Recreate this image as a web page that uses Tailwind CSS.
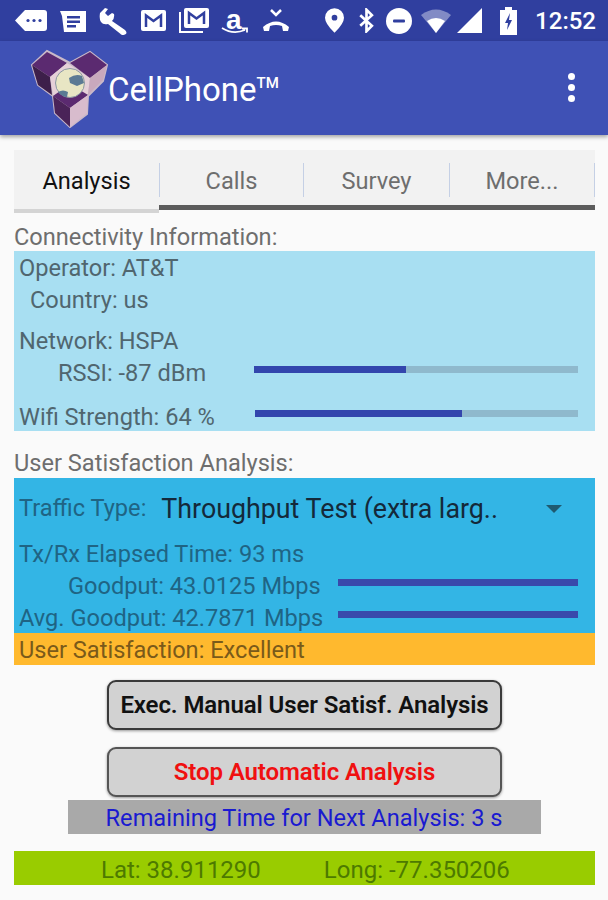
<!DOCTYPE html>
<html lang="en">
  <head>
    <meta charset="UTF-8" />
    <meta name="viewport" content="width=device-width, initial-scale=1.0" />
    <title>CellPhone</title>
    <script src="https://cdn.jsdelivr.net/npm/@tailwindcss/browser@4"></script>
  </head>
  <body class="w-[608px] h-[900px] overflow-hidden bg-[#fafafa] font-['Roboto',sans-serif] text-[23.6px] text-[#6e6e6e]">
    <!-- status bar -->
    <div class="h-[41px] bg-[#303f9f] flex items-center text-white">
      <div class="flex items-center ml-[15px] gap-[13px]">
        <svg class="w-[32px] h-[23px]" viewBox="0 0 32 23" fill="#fff"><path d="M10 1h19a3 3 0 0 1 3 3v15a3 3 0 0 1-3 3H10L0 11.500z"/><circle cx="13" cy="11.500" r="1.600" fill="#303f9f"/><circle cx="19" cy="11.500" r="1.600" fill="#303f9f"/><circle cx="25" cy="11.500" r="1.600" fill="#303f9f"/></svg>
        <svg class="w-[26px] h-[22px]" viewBox="0 0 26 22" fill="#fff"><path d="M0 1h26v21H4L2 6z"/><path d="M7 6h13v2.500H7zM7 10.500h13V13H7zM7 15h9v2.500H7z" fill="#303f9f"/></svg>
        <svg class="w-[29px] h-[28px]" viewBox="0 0 29 28" fill="#fff"><path d="M1 6l5-5 3 1-3 4 3 3 4-3 2 1a8 8 0 0 1-2 7l13 9q3 3 0 4.500t-5-1L9 17q-5 1-7-2T1 6z"/></svg>
        <svg class="w-[25px] h-[21px]" viewBox="0 0 25 21"><rect width="25" height="21" rx="2" fill="#fff"/><path d="M5 17V5.500l7.500 5.500L20 5.500V17" fill="none" stroke="#303f9f" stroke-width="2.500"/></svg>
        <svg class="w-[30px] h-[25px]" viewBox="0 0 30 25"><path d="M1 4v20h23" fill="none" stroke="#fff" stroke-width="2"/><rect x="5" width="25" height="20" rx="2" fill="#fff"/><path d="M10 16V5l7.500 5.500L25 5v11" fill="none" stroke="#303f9f" stroke-width="2.500"/></svg>
        <div class="relative w-[28px] h-[26px] -ml-[1px]">
          <span class="absolute left-[5px] top-[-2px] text-[28px] leading-[28px] font-bold font-['Liberation_Sans',sans-serif]">a</span>
          <svg class="absolute left-0 bottom-0 w-[28px] h-[7px]" viewBox="0 0 28 7" fill="none" stroke="#fff" stroke-width="1.800"><path d="M1 1q11 7 23 2M21 1.500h5v4"/></svg>
        </div>
        <svg class="w-[26px] h-[23px] ml-[1px]" viewBox="0 0 26 23" fill="#fff"><path d="M0 18q13-11 26 0l-1 4h-5l-1-5q-6-2-12 0l-1 5H1z"/><path d="M8 1l5 5 5-5" fill="none" stroke="#fff" stroke-width="2.500"/></svg>
      </div>
      <div class="flex items-center ml-auto mr-[12px]">
        <svg class="w-[19px] h-[25px]" viewBox="0 0 20 26" fill="#fff"><path fill-rule="evenodd" d="M10 0a10 10 0 0 1 10 10q0 6-10 16Q0 16 0 10A10 10 0 0 1 10 0zm0 7a3 3 0 1 0 0 6 3 3 0 0 0 0-6z"/></svg>
        <svg class="w-[17px] h-[25px] ml-[14px]" viewBox="0 0 18 28" fill="none" stroke="#fff" stroke-width="3"><path d="M2 8l13 12-6 6V2l6 6L2 20"/></svg>
        <svg class="w-[26px] h-[26px] ml-[11px]" viewBox="0 0 26 26"><circle cx="13" cy="13" r="13" fill="#fff"/><rect x="7" y="11.500" width="12" height="3" rx="1" fill="#303f9f"/></svg>
        <svg class="w-[30px] h-[24px] ml-[9px]" viewBox="0 0 30 24"><path d="M0 6Q15-5 30 6L15 24z" fill="#fff" fill-opacity=".4"/><path d="M6 12q9-6 18 0l-9 12z" fill="#fff"/></svg>
        <svg class="w-[25px] h-[25px] ml-[6px]" viewBox="0 0 25 25" fill="#fff"><path d="M25 0v25H0z"/></svg>
        <svg class="w-[17px] h-[28px] ml-[18px]" viewBox="0 0 17 28"><path d="M5 0h7v3h5v25H0V3h5z" fill="#fff"/><path d="M10 6l-5 10h3l-1 7 5-10H9z" fill="#303f9f"/></svg>
        <span class="ml-[18px] text-[24px] leading-none font-medium">12:52</span>
      </div>
    </div>
    <!-- app bar -->
    <div class="h-[94px] bg-[#3f51b5] shadow-[0_2px_4px_rgba(0,0,0,0.35)] flex items-center text-white relative">
      <svg class="w-[80px] h-[80px] ml-[29px] shrink-0" viewBox="0 0 80 80">
        <path d="M3 17L18 3l23 12 20-11 17 13-4 16-15 15-1 18-17 13-15-14-2-17-15-11z" fill="#c9b9c9" stroke="#c9b9c9" stroke-width="2"/>
        <path d="M3 17L18 4l20 11-17 14z" fill="#5b2a70"/>
        <path d="M3 17l18 12 2 18-14-10z" fill="#3d1f4a"/>
        <path d="M21 29l17-14 23 15-2 16-18 14-17-13z" fill="#e5d0d8"/>
        <path d="M41 15L61 4l17 13-17 13z" fill="#5b2a70"/>
        <path d="M61 30l17-13-4 15-15 15z" fill="#c9a9bd"/>
        <path d="M24 48l17-12 18 11-18 13z" fill="#5b2a70"/>
        <path d="M24 48l17 12v19L26 65z" fill="#4a2358"/>
        <path d="M41 60l18-13-1 18-17 14z" fill="#d8bccd"/>
        <circle cx="41" cy="35" r="14.500" fill="#e8e6c4" stroke="#8a97a3" stroke-width="1"/>
        <path d="M40 30q7-5 13-2l2 7-7 3-7-3zM29 44q5-3 10 0l-1 5q-5 0-9-5z" fill="#5b7a94"/>
      </svg>
      <span class="ml-[-1px] mt-[3px] text-[33px] leading-none">CellPhone<span class="text-[15px] align-[13px] font-medium">TM</span></span>
      <div class="ml-auto mr-[33px] flex flex-col gap-[4px] mt-[-1px]">
        <span class="w-[7px] h-[7px] rounded-full bg-white"></span>
        <span class="w-[7px] h-[7px] rounded-full bg-white"></span>
        <span class="w-[7px] h-[7px] rounded-full bg-white"></span>
      </div>
    </div>
    <!-- content -->
    <div class="pl-[14px] pr-[13px] pt-[15px]">
      <div class="h-[63px] flex relative">
        <div class="w-[145px] h-[63px] bg-[#f2f2f2] flex items-center justify-center pt-[5px] border-b-[4px] border-[#d4d4d4] text-[#111]">Analysis</div>
        <div class="flex-1 h-[60px] bg-[#f2f2f2] flex border-b-[5px] border-[#5c5c5c]">
          <div class="w-[144px] flex items-center justify-center pt-[3px] border-l border-[#c5d0e5] mt-[13px] mb-[8px]">Calls</div>
          <div class="w-[146px] flex items-center justify-center pt-[3px] border-l border-[#c5d0e5] mt-[13px] mb-[8px]">Survey</div>
          <div class="flex-1 flex items-center justify-center pt-[3px] border-x border-[#c5d0e5] mt-[13px] mb-[8px]">More...</div>
        </div>
      </div>
      <div class="h-[38px] flex items-end pb-[1px] leading-[26px]">Connectivity Information:</div>
      <div class="h-[180px] bg-[#a8dff2] pl-[5px] pr-[17px] pt-[2px] text-[#50666f]">
        <div class="h-[32px] flex items-center">Operator: AT&amp;T</div>
        <div class="h-[32px] flex items-center pl-[11px]">Country: us</div>
        <div class="h-[32px] flex items-center mt-[9px]">Network: HSPA</div>
        <div class="h-[32px] flex items-center relative pl-[39px]">RSSI: -87 dBm
          <div class="absolute left-[235px] right-0 top-[8px] h-[7px] bg-[#8fb9cd]"><div class="h-full bg-[#3346ad]" style="width: 47%"></div></div>
        </div>
        <div class="h-[32px] flex items-center mt-[12px] relative">Wifi Strength: 64 %
          <div class="absolute left-[236px] right-0 top-[8px] h-[7px] bg-[#8fb9cd]"><div class="h-full bg-[#3346ad]" style="width: 64%"></div></div>
        </div>
      </div>
      <div class="h-[47px] flex items-end pb-[2px] leading-[26px]">User Satisfaction Analysis:</div>
      <div class="h-[155px] bg-[#33b5e5] pl-[5px] pr-[17px] pt-[1px] text-[#1f6484]">
        <div class="h-[60px] flex items-center">Traffic Type:
          <span class="ml-[15px] text-[26.800px] text-[#14293a]">Throughput Test (extra larg..</span>
          <span class="ml-auto mr-[16px] w-0 h-0 border-x-[8px] border-x-transparent border-t-[8px] border-t-[#1f5a70]"></span>
        </div>
        <div class="h-[32px] flex items-center">Tx/Rx Elapsed Time: 93 ms</div>
        <div class="h-[32px] flex items-center relative pl-[49px]">Goodput: 43.0125 Mbps
          <div class="absolute left-[319px] right-0 top-[8px] h-[7px] bg-[#3949ab]"></div>
        </div>
        <div class="h-[32px] flex items-center relative">Avg. Goodput: 42.7871 Mbps
          <div class="absolute left-[319px] right-0 top-[8px] h-[7px] bg-[#3949ab]"></div>
        </div>
      </div>
      <div class="h-[32px] bg-[#ffb92e] pl-[5px] pt-[3px] flex items-center text-[#7a5a1a]">User Satisfaction: Excellent</div>
      <div class="flex flex-col items-center">
        <button class="mt-[15px] w-[395px] h-[50px] rounded-[9px] bg-[#d2d2d2] border-2 border-[#3a3a3a] shadow-[0_1px_3px_rgba(0,0,0,0.4)] font-semibold text-[24px] tracking-[-0.1px] text-[#111]">Exec. Manual User Satisf. Analysis</button>
        <button class="mt-[17px] w-[395px] h-[50px] rounded-[9px] bg-[#d2d2d2] border-2 border-[#555] shadow-[0_1px_3px_rgba(0,0,0,0.4)] font-semibold text-[24px] tracking-[-0.1px] text-[#f01010]">Stop Automatic Analysis</button>
        <div class="mt-[3px] w-[473px] h-[34px] pt-[3px] bg-[#a9a9a9] flex items-center justify-center text-[#1a1ad0] ml-[-1px]">Remaining Time for Next Analysis: 3 s</div>
      </div>
      <div class="mt-[17px] h-[34px] pt-[3px] bg-[#99cc00] flex items-center text-[24px] text-[#4d7a00] pl-[87px]">
        <span>Lat: 38.911290</span><span class="ml-[63px]">Long: -77.350206</span>
      </div>
    </div>
  </body>
</html>
